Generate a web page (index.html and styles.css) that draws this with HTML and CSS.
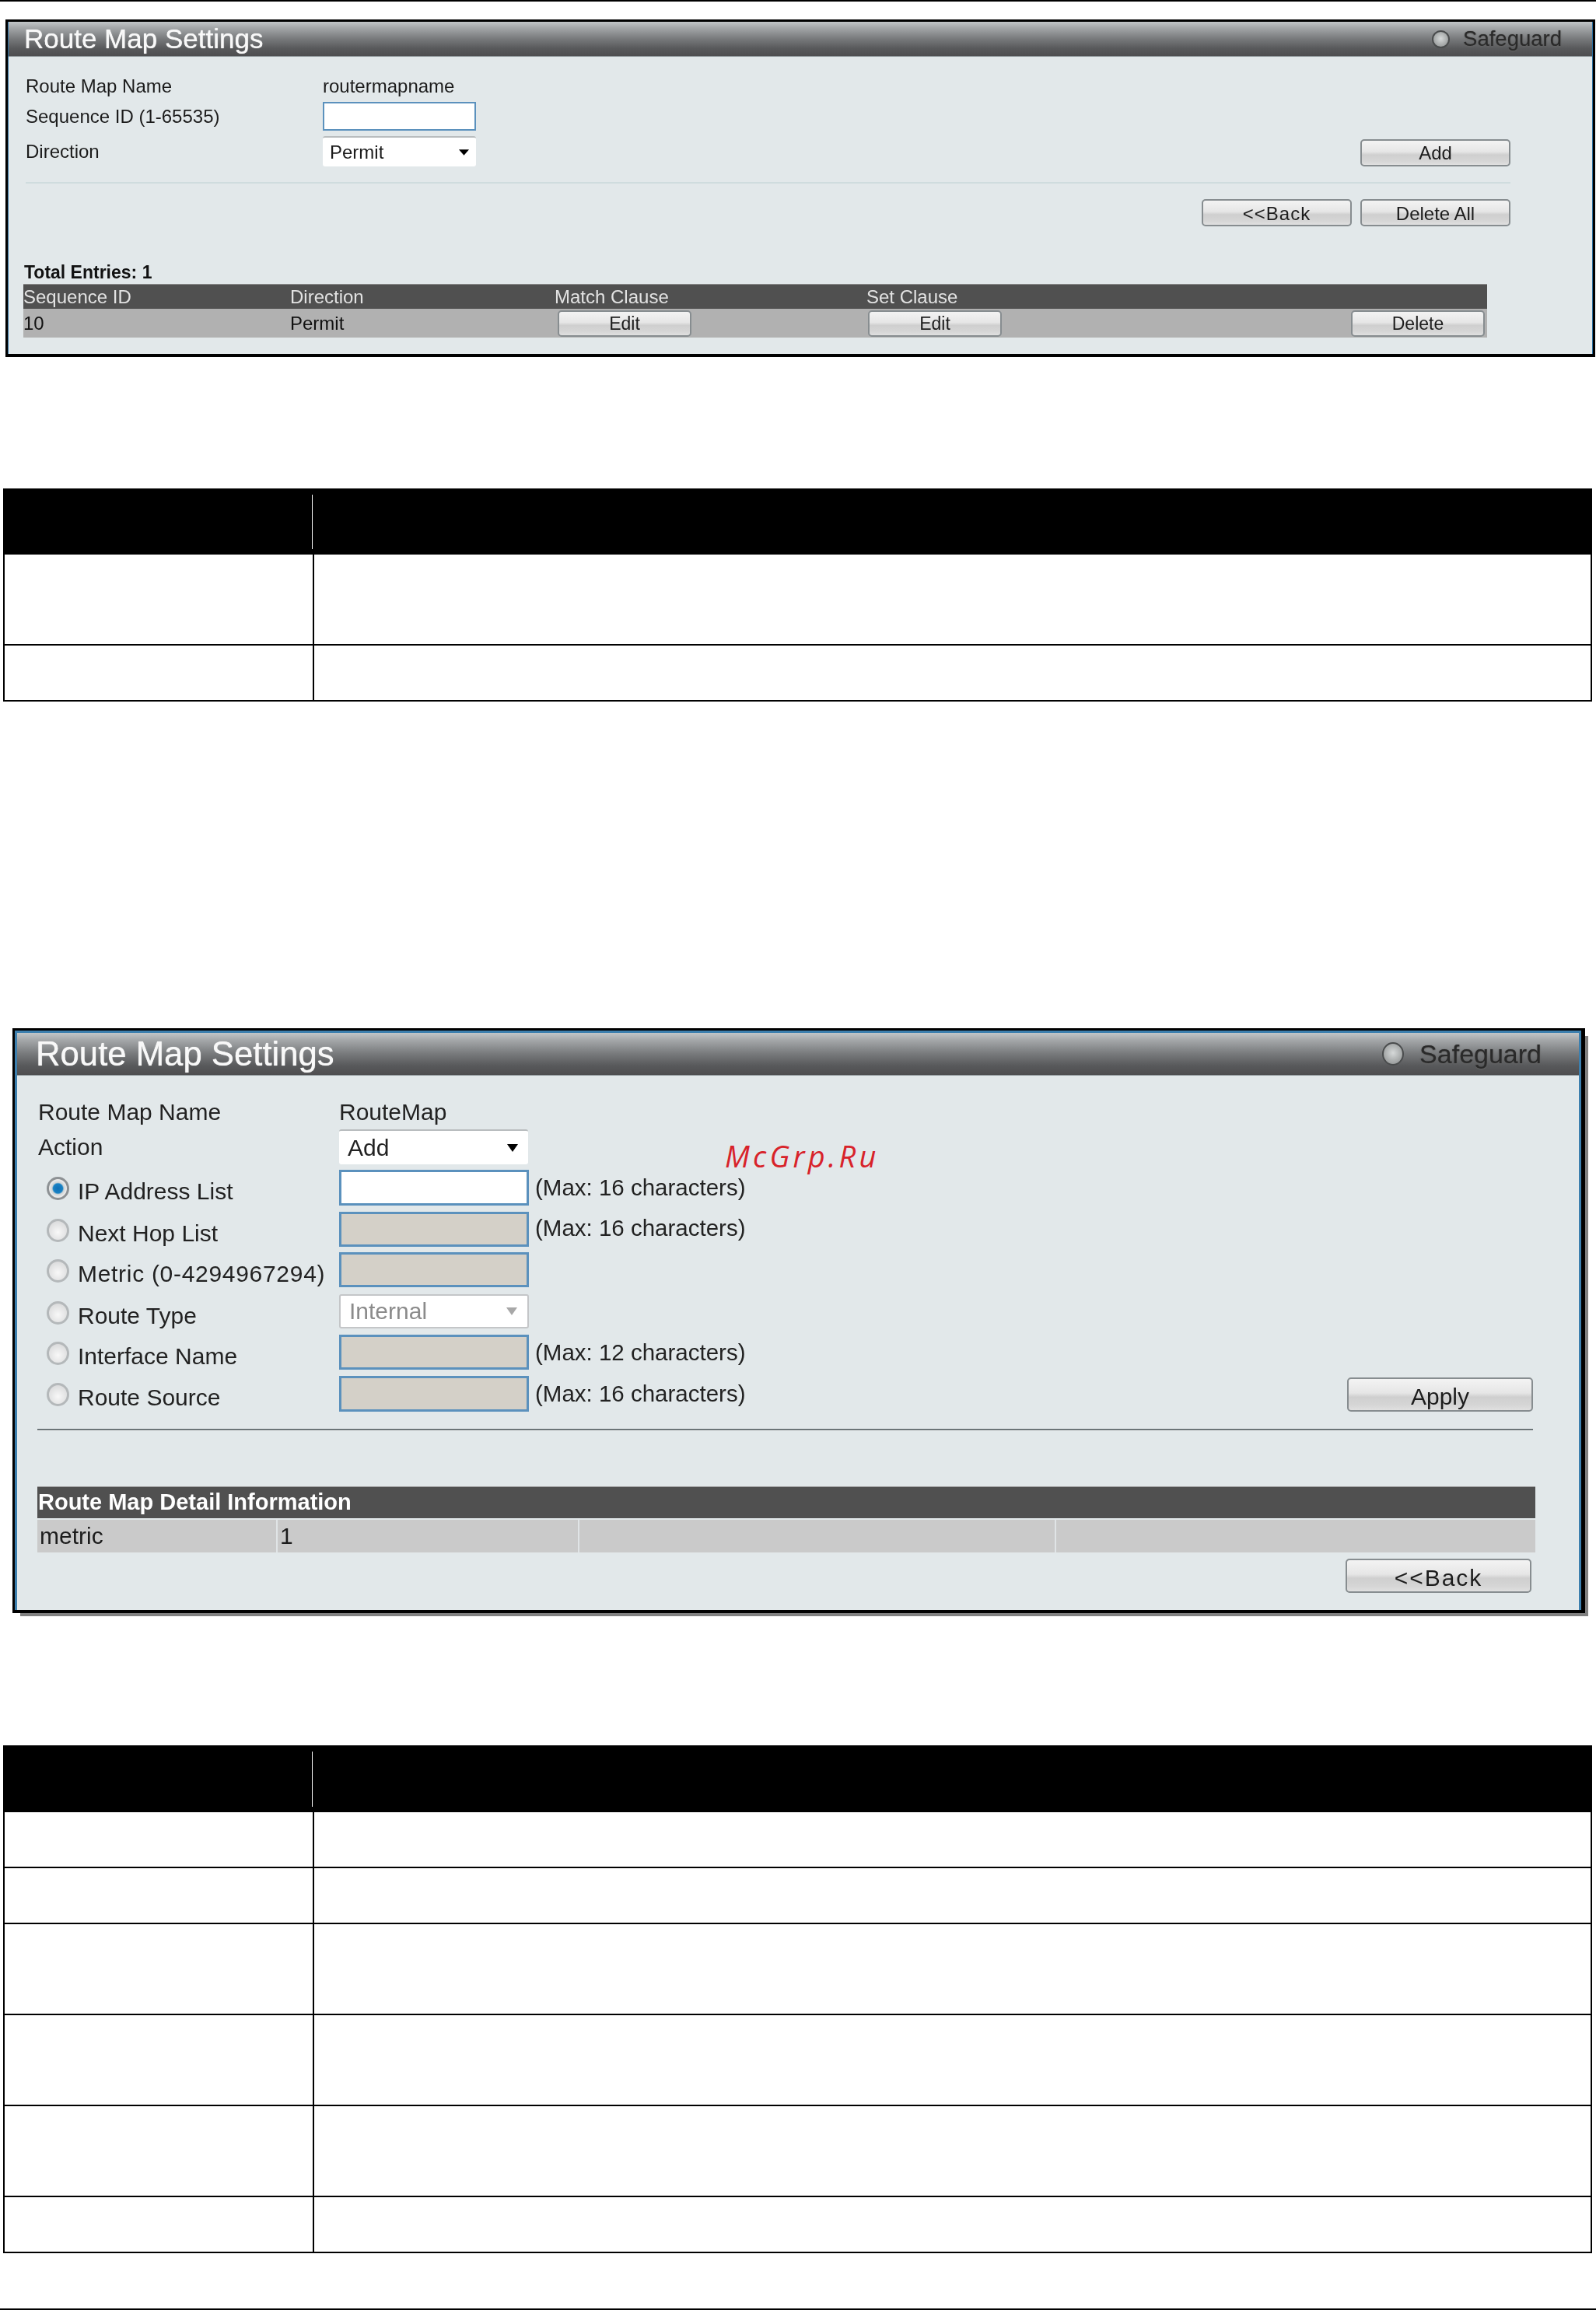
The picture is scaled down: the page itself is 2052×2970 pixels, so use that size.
FILE: index.html
```html
<!DOCTYPE html>
<html lang="en">
<head>
<meta charset="utf-8">
<title>Route Map Settings</title>
<link rel="stylesheet" href="styles.css">
</head>
<body>
<div class="topline"></div>

<section class="panel panel-a">
  <div class="inner">
    <header class="title">
      <h1>Route Map Settings</h1>
      <div class="safeguard"><i class="led"></i><span>Safeguard</span></div>
    </header>
    <div class="body">
      <div class="row r1"><label>Route Map Name</label><span>routermapname</span></div>
      <div class="row r2"><label>Sequence ID (1-65535)</label><input class="field" type="text"></div>
      <div class="row r3">
        <label>Direction</label>
        <div class="select"><span>Permit</span><svg class="arrow" viewBox="0 0 14 8"><path d="M0 0h14L7 8z"/></svg></div>
        <button class="btn end">Add</button>
      </div>
      <div class="rule"></div>
      <div class="actions"><button class="btn spaced">&lt;&lt;Back</button><button class="btn">Delete All</button></div>
      <div class="total">Total Entries: 1</div>
      <div class="grid-table">
        <div class="head"><span>Sequence ID</span><span>Direction</span><span>Match Clause</span><span>Set Clause</span><span></span></div>
        <div class="data">
          <span>10</span><span>Permit</span>
          <span class="b1"><button class="btn">Edit</button></span>
          <span class="b2"><button class="btn">Edit</button></span>
          <span><button class="btn">Delete</button></span>
        </div>
      </div>
    </div>
  </div>
</section>

<table class="spec spec-a">
  <thead><tr><th><div></div></th><th></th></tr></thead>
  <tbody>
    <tr class="h116"><td></td><td></td></tr>
    <tr class="h70"><td></td><td></td></tr>
  </tbody>
</table>

<section class="panel panel-b">
  <div class="inner">
    <header class="title">
      <h1>Route Map Settings</h1>
      <div class="safeguard"><i class="led"></i><span>Safeguard</span></div>
    </header>
    <div class="body">
      <div class="line top"><label>Route Map Name</label><span>RouteMap</span></div>
      <div class="line act">
        <label>Action</label>
        <div class="select"><span>Add</span><svg class="arrow" viewBox="0 0 14 10"><path d="M0 0h14L7 10z"/></svg></div>
      </div>
      <div class="opt m7"><label><i class="radio on"></i>IP Address List</label><input class="field" type="text"><span class="max">(Max: 16 characters)</span></div>
      <div class="opt m8 h45"><label><i class="radio"></i>Next Hop List</label><input class="field off" type="text" disabled><span class="max up">(Max: 16 characters)</span></div>
      <div class="opt m7 h45"><label><i class="radio"></i><span class="wide">Metric (0-4294967294)</span></label><input class="field off" type="text" disabled></div>
      <div class="opt m9"><label><i class="radio"></i>Route Type</label><div class="select dim"><span>Internal</span><svg class="arrow" viewBox="0 0 14 10"><path d="M0 0h14L7 10z"/></svg></div></div>
      <div class="opt m8 h45"><label><i class="radio"></i>Interface Name</label><input class="field off" type="text" disabled><span class="max">(Max: 12 characters)</span></div>
      <div class="opt m8 last"><label><i class="radio"></i>Route Source</label><input class="field off" type="text" disabled><span class="max">(Max: 16 characters)</span><button class="btn end">Apply</button></div>
      <div class="rule dark"></div>
      <div class="detail">
        <div class="detail-head">Route Map Detail Information</div>
        <div class="detail-row"><span>metric</span><span>1</span><span></span><span></span></div>
      </div>
      <div class="back"><button class="btn spaced">&lt;&lt;Back</button></div>
    </div>
  </div>
  <div class="mark">McGrp.Ru</div>
</section>

<table class="spec spec-b">
  <thead><tr><th><div></div></th><th></th></tr></thead>
  <tbody>
    <tr class="h70"><td></td><td></td></tr>
    <tr class="h70"><td></td><td></td></tr>
    <tr class="h116"><td></td><td></td></tr>
    <tr class="h116"><td></td><td></td></tr>
    <tr class="h116"><td></td><td></td></tr>
    <tr class="h70"><td></td><td></td></tr>
  </tbody>
</table>

<div class="baseline"></div>
</body>
</html>
```

FILE: styles.css
```css
* { box-sizing: border-box; }
html, body { margin: 0; padding: 0; background: #fff; }
body { width: 2052px; height: 2970px; overflow: hidden; font-family: "Liberation Sans", Arial, sans-serif; color: #1c1c1c; }

.topline { height: 2px; background: #000; }
.baseline { height: 2px; background: #000; margin-top: 71px; }

/* Panels */
.panel { position: relative; background: #000; }
.inner { height: 100%; display: flex; flex-direction: column; border-style: solid; filter: blur(.45px); }
.title { display: flex; justify-content: space-between; align-items: center; flex: none;
  background: linear-gradient(#c2c6c8 0%, #a6a9ab 16%, #7a7c7e 48%, #58595b 78%, #4e4e50 100%);
  border-bottom: 1px solid #8f989b; }
.title h1 { margin: 0; font-weight: 400; color: #f8f8f8; text-shadow: 0 0 1px #fff; }
.safeguard { display: flex; align-items: center; color: #2a2a2a; text-shadow: 0 1px 2px #666, 0 0 1px #444; }
.led { display: block; border-radius: 50%; border: 2px solid #4a4c4d;
  background: radial-gradient(circle at 50% 45%, #d6d9d9, #9b9e9e 75%); }
.body { flex: 1; background: #e2e8ea; display: flex; flex-direction: column; }

/* Panel A */
.panel-a { width: 2044px; height: 434px; margin: 23px 0 0 7px; border: 3px solid #000; border-bottom-width: 4px; }
.panel-a .inner { border-width: 0 1px; border-color: #2a6c9c; }
.panel-a .title { height: 45px; padding: 0 39px 0 20px; }
.panel-a h1 { font-size: 35px; line-height: 40px; }
.panel-a .safeguard { font-size: 27.5px; gap: 17px; }
.panel-a .led { width: 23px; height: 23px; }
.panel-a .body { padding: 20px 105px 0 19px; font-size: 24px; }

.row { display: flex; align-items: center; padding-left: 3px; }
.row label { width: 382px; flex: none; }
.r1 { height: 36px; }
.r2 { height: 37px; margin-top: 2px; }
.r3 { height: 39px; margin-top: 7px; }
.panel-a .field { width: 197px; height: 37px; border: 2px solid #5b91bd; }
.panel-a .select { width: 197px; height: 39px; padding: 0 9px; }
.panel-a .arrow { width: 13px; height: 8px; }
.panel-a .btn { width: 193px; height: 35px; padding-top: 2px; font-size: 24px; }
.panel-a .btn.spaced { letter-spacing: 1px; }
.panel-a .end { margin: 3px 0 0 auto; }

.field { display: block; background: #fff; outline: 0; padding: 0; }
.field.off { background: #d4d0c8; }
.select { display: flex; justify-content: space-between; align-items: center; background: #fff;
  border-radius: 3px; border-top: 2px solid #b9bdbf; }
.select.dim { color: #8b8b8b; background: #fff; border: 2px solid #c4c6c8; }
.select.dim .arrow { fill: #a8a8a8; }

.btn { display: block; margin: 0; padding: 0; border: 2px solid #878d90; border-radius: 5px; color: #1c1c1c;
  font-family: inherit; background: linear-gradient(#f3f3f3 0%, #e6e6e6 45%, #cfcfcf 58%, #d6d6d6 85%, #e0e0e0 100%); }

.rule { height: 2px; margin-top: 20px; margin-left: 3px; background: #cfdcde; }
.actions { display: flex; justify-content: flex-end; gap: 11px; margin-top: 20px; }
.total { height: 29px; margin-top: 45px; line-height: 29px; padding-left: 1px; font-weight: 700; font-size: 23px; color: #111; }

.grid-table { width: 1882px; }
.head, .data { display: grid; grid-template-columns: 343px 340px 401px 623px 175px; align-items: center; }
.head { height: 32px; background: #505050; color: #e2e2e2; border-top: 1px solid #8d8d8d; }
.data { height: 37px; background: #b1b1b1; color: #111; }
.panel-a .data .btn { width: 172px; height: 34px; font-size: 23px; }
.b1 { padding-left: 4px; }
.b2 { padding-left: 2px; }

/* Panel B */
.panel-b { width: 2022px; height: 752px; margin: 420px 0 0 16px; border: solid #000; border-width: 3px 5px 4px 3px;
  box-shadow: 7px 7px 0 -3px #808080; }
.panel-b .inner { border-width: 3px 3px 0; border-color: #3c7fae; }
.panel-b .title { height: 55px; padding: 0 48px 0 24px; }
.panel-b h1 { font-size: 43.7px; line-height: 50px; }
.panel-b .safeguard { font-size: 34px; gap: 20px; }
.panel-b .led { width: 28px; height: 30px; }
.panel-b .body { padding: 0 56px 0 26px; font-size: 30px; color: #222; }

.line { display: flex; align-items: center; padding-left: 1px; }
.line label { width: 387px; flex: none; }
.line.top { height: 34px; margin-top: 30px; }
.line.act { height: 45px; margin-top: 5px; }
.panel-b .select { width: 243px; height: 45px; padding: 0 12px 0 11px; }
.panel-b .arrow { width: 16px; height: 10px; }

.opt { display: grid; grid-template-columns: 388px 244px auto 1fr; column-gap: 0; align-items: start; }
.opt label { display: flex; padding: 13px 0 0 12px; line-height: 30px; }
.radio { display: block; flex: none; width: 29px; height: 30px; margin: -4px 11px 0 0; border-radius: 50%;
  border: 3px solid #b4b8ba; background: radial-gradient(circle at 50% 60%, #f8f8f8, #d2d3d4); }
.radio.on { background: radial-gradient(circle at 50% 50%, #0f6fb5 0, #1a82c4 36%, #cfd4d6 46%, #eaeaea 66%); border-color: #8d9194; }
.wide { letter-spacing: .7px; white-space: nowrap; }
.panel-b .field { width: 244px; height: 46px; border: 3px solid #5b91bd; }
.panel-b .h45 .field { height: 45px; }
.panel-b .opt .select { width: 244px; height: 44px; }
.max { padding: 8px 0 0 8px; line-height: 30px; font-size: 29.5px; white-space: nowrap; }
.max.up { padding-top: 6px; }
.m7 { margin-top: 7px; }
.m8 { margin-top: 8px; }
.m9 { margin-top: 9px; }
.panel-b .btn { width: 239px; height: 44px; padding-top: 5px; font-size: 30px; }
.panel-b .btn.spaced { letter-spacing: 2px; }
.last .btn { justify-self: end; margin: 2px 3px 0 0; }

.rule.dark { height: 3px; margin: 22px 3px 0 0; background: linear-gradient(#6b7477 0 66%, #eef2f3 66%); }
.detail { margin-top: 71px; }
.detail-head { height: 41px; padding-left: 1px; line-height: 38px; background: #505050; color: #fff; font-weight: 700; font-size: 29px; border-top: 1px solid #9a9a9a; }
.detail-row { display: grid; grid-template-columns: 307px 388px 613px 617px; height: 42px; margin-top: 2px; background: #cacaca; line-height: 42px; color: #1c1c1c; }
.detail-row span { padding-left: 3px; }
.detail-row span + span { border-left: 2px solid #e0e4e6; }
.back { display: flex; justify-content: flex-end; margin-top: 8px; padding-right: 5px; }

.mark { position: absolute; left: 913px; top: 136px; font-family: "Open Sans", "Noto Sans", sans-serif; font-style: italic; font-size: 38px; line-height: 50px; letter-spacing: 4.2px; color: #d8232a; white-space: nowrap; }

/* Parameter tables */
.spec { width: 2043px; margin-left: 4px; table-layout: fixed; border-collapse: separate; border-spacing: 0; }
.spec-a { margin-top: 169px; }
.spec-b { margin-top: 170px; }
.spec th { height: 85px; padding: 8px 0 7px; background: #000; }
.spec th:first-child { width: 400px; }
.spec th div { width: 398px; height: 70px; border-right: 1px solid #fff; }
.spec-b th { height: 86px; }
.spec-b th div { height: 71px; }
.spec td { padding: 0; border-bottom: 2px solid #000; border-right: 2px solid #000; background: #fff; }
.spec td:first-child { border-left: 2px solid #000; }
.h116 td { height: 117px; }
.h70 td { height: 72px; }
```
